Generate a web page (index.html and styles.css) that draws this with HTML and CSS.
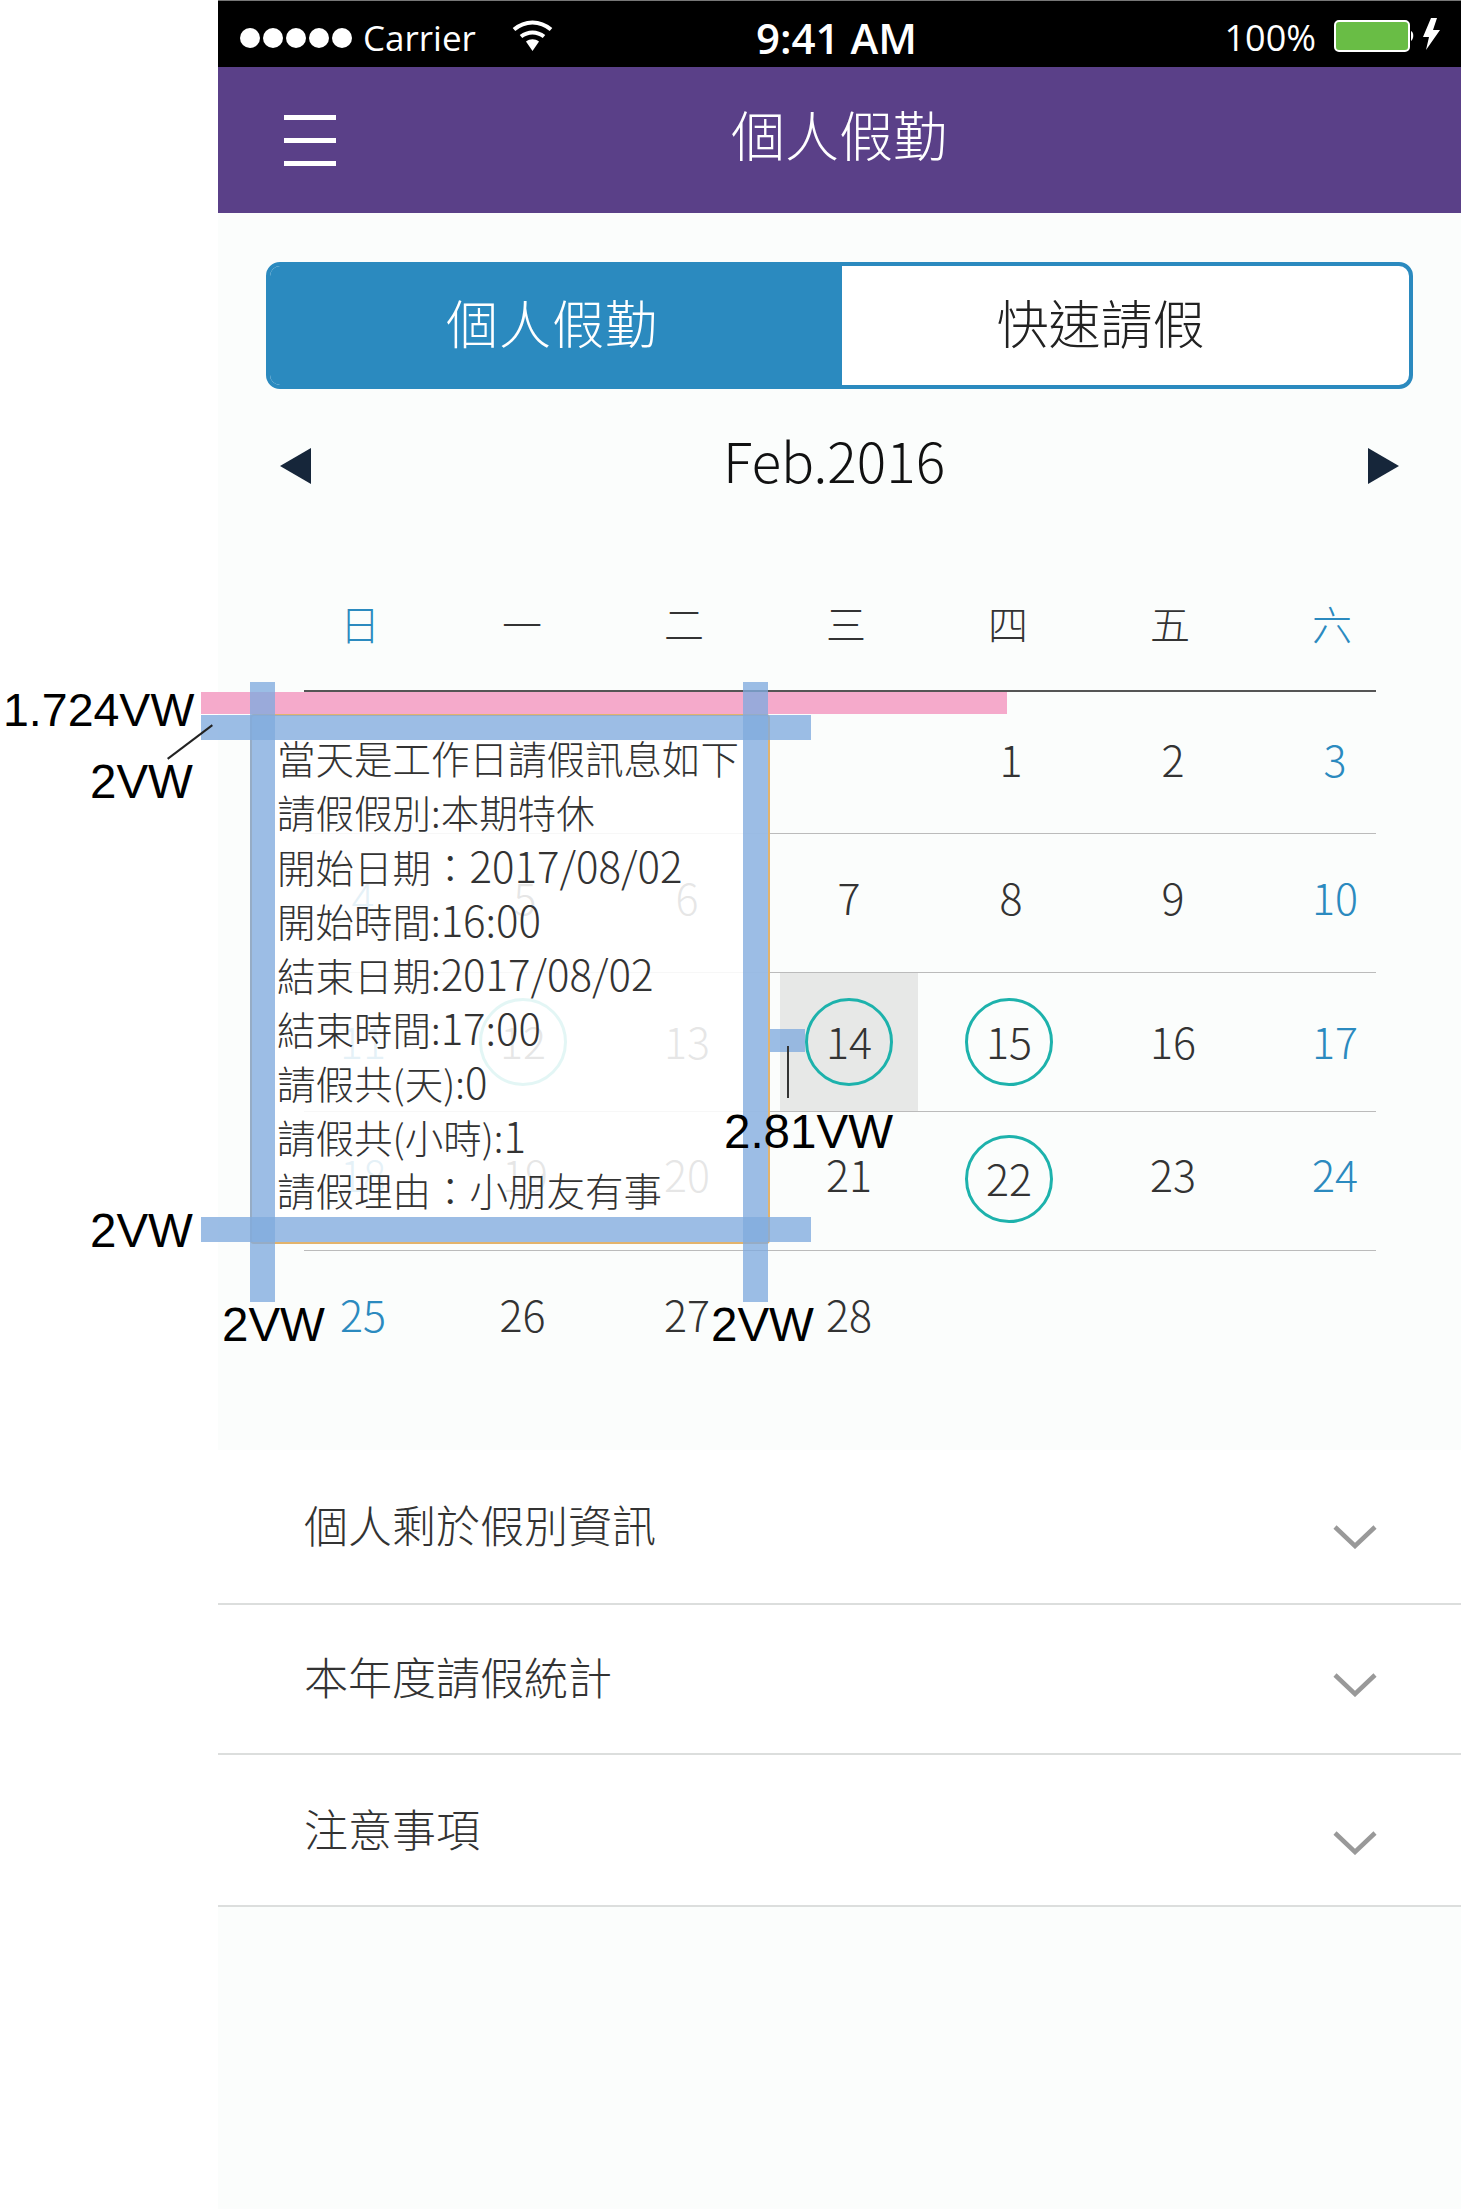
FILE: index.html
```html
<!DOCTYPE html>
<html lang="zh-Hant">
<head>
    <meta charset="UTF-8">
    <meta name="viewport" content="width=device-width, initial-scale=1.0">
    <title>個人假勤</title>
    <link rel="stylesheet" href="styles.css">
</head>
<body>
    <div class="phone">
        <div class="status-bar">
            <div class="status-left">
                <div class="signal"><i></i><i></i><i></i><i></i><i></i></div>
                <span class="carrier">Carrier</span>
                <svg class="wifi" width="41" height="31" viewBox="0 0 41 31">
                    <path d="M2 9.5C13 0 28 0 39 9.5" fill="none" stroke="#fff" stroke-width="4"/>
                    <path d="M9 16.5C16 11 25 11 32 16.5" fill="none" stroke="#fff" stroke-width="4"/>
                    <path d="M14 21.5C18 18.5 23 18.5 27 21.5L20.5 31Z" fill="#fff"/>
                </svg>
            </div>
            <div class="clock">9:41 AM</div>
            <div class="status-right">
                <span class="percent">100%</span>
                <svg class="battery" width="106" height="34" viewBox="0 0 106 34">
                    <rect x="1" y="3" width="74" height="30" rx="4" fill="#69bd45" stroke="#fff" stroke-width="2"/>
                    <path d="M77 13C80 14 80 21 77 23Z" fill="#fff"/>
                    <path d="M97 0L89 19H95L92 32L106 12H99L103 0Z" fill="#fff"/>
                </svg>
            </div>
        </div>

        <div class="nav-bar">
            <div class="menu-btn"><i></i><i></i><i></i></div>
            <div class="nav-title">個人假勤</div>
        </div>

        <div class="main">
            <div class="tabs">
                <div class="tab tab-on">個人假勤</div>
                <div class="tab tab-off">快速請假</div>
            </div>

            <div class="month-bar">
                <svg class="arrow" width="31" height="36" viewBox="0 0 31 36"><path d="M31 0V36L0 18Z" fill="#16263a"/></svg>
                <div class="month-name">Feb.2016</div>
                <svg class="arrow" width="31" height="36" viewBox="0 0 31 36"><path d="M0 0V36L31 18Z" fill="#16263a"/></svg>
            </div>

            <div class="calendar">
                <div class="week-head">
                    <div class="cells">
                        <div class="cell blue">日</div>
                        <div class="cell">一</div>
                        <div class="cell">二</div>
                        <div class="cell">三</div>
                        <div class="cell">四</div>
                        <div class="cell">五</div>
                        <div class="cell blue">六</div>
                    </div>
                </div>
                <div class="week r1">
                    <div class="cells">
                        <div class="cell"></div>
                        <div class="cell"></div>
                        <div class="cell"></div>
                        <div class="cell"></div>
                        <div class="cell">1</div>
                        <div class="cell">2</div>
                        <div class="cell blue">3</div>
                    </div>
                </div>
                <div class="week r2">
                    <div class="cells">
                        <div class="cell blue">4</div>
                        <div class="cell">5</div>
                        <div class="cell">6</div>
                        <div class="cell">7</div>
                        <div class="cell">8</div>
                        <div class="cell">9</div>
                        <div class="cell blue">10</div>
                    </div>
                </div>
                <div class="week r3">
                    <div class="cells">
                        <div class="cell blue">11</div>
                        <div class="cell"><span class="ring ring-l">12</span></div>
                        <div class="cell">13</div>
                        <div class="cell today"><span class="ring">14</span></div>
                        <div class="cell"><span class="ring ring-l">15</span></div>
                        <div class="cell">16</div>
                        <div class="cell blue">17</div>
                    </div>
                </div>
                <div class="week r4">
                    <div class="cells">
                        <div class="cell blue">18</div>
                        <div class="cell">19</div>
                        <div class="cell">20</div>
                        <div class="cell">21</div>
                        <div class="cell"><span class="ring ring-l">22</span></div>
                        <div class="cell">23</div>
                        <div class="cell blue">24</div>
                    </div>
                </div>
                <div class="week r5">
                    <div class="cells">
                        <div class="cell blue">25</div>
                        <div class="cell cell-l">26</div>
                        <div class="cell">27</div>
                        <div class="cell">28</div>
                        <div class="cell"></div>
                        <div class="cell"></div>
                        <div class="cell"></div>
                    </div>
                </div>

                <div class="leave-popup">
                    <p>當天是工作日請假訊息如下</p>
                    <p>請假假別:本期特休</p>
                    <p>開始日期：<span class="lat">2017/08/02</span></p>
                    <p>開始時間:<span class="lat">16:00</span></p>
                    <p>結束日期:<span class="lat">2017/08/02</span></p>
                    <p>結束時間:<span class="lat">17:00</span></p>
                    <p>請假共(天):<span class="lat">0</span></p>
                    <p>請假共(小時):<span class="lat">1</span></p>
                    <p>請假理由：小朋友有事</p>
                </div>
            </div>
        </div>

        <div class="accordion">
            <div class="acc-row acc-1">
                <span>個人剩於假別資訊</span>
                <svg class="chev" width="44" height="24" viewBox="0 0 44 24"><path d="M2 2L22 21L42 2" fill="none" stroke="#999" stroke-width="4.5"/></svg>
            </div>
            <div class="acc-row acc-2">
                <span>本年度請假統計</span>
                <svg class="chev" width="44" height="24" viewBox="0 0 44 24"><path d="M2 2L22 21L42 2" fill="none" stroke="#999" stroke-width="4.5"/></svg>
            </div>
            <div class="acc-row acc-3">
                <span>注意事項</span>
                <svg class="chev" width="44" height="24" viewBox="0 0 44 24"><path d="M2 2L22 21L42 2" fill="none" stroke="#999" stroke-width="4.5"/></svg>
            </div>
        </div>
        <div class="page-end"></div>
    </div>

    <!-- spec marks drawn over the design -->
    <div class="mark mark-pink"></div>
    <div class="mark mark-top"></div>
    <div class="mark mark-bottom"></div>
    <div class="mark mark-left"></div>
    <div class="mark mark-right"></div>
    <div class="mark mark-gap"></div>
    <div class="tick"></div>
    <div class="leader"></div>
    <div class="note note-a">1.724VW</div>
    <div class="note note-b">2VW</div>
    <div class="note note-c">2VW</div>
    <div class="note note-d">2VW</div>
    <div class="note note-e">2VW</div>
    <div class="note note-f">2.81VW</div>
</body>
</html>
```

FILE: styles.css
```css
* { box-sizing: border-box; }
body { margin: 0; width: 1461px; height: 2209px; position: relative; overflow: hidden; background: #fff; font-family: "Noto Sans CJK TC", "Noto Sans", sans-serif; font-weight: 300; color: #333; }
p { margin: 0; height: 54px; }

.phone { margin-left: 218px; height: 2209px; background: #fbfdfc; display: flex; flex-direction: column; }

.status-bar { height: 67px; padding-top: 7px; background: #000; border-top: 1px solid #777; color: #fff; display: grid; grid-template-columns: 1fr auto 1fr; align-items: center; font-family: "Open Sans", sans-serif; font-weight: 400; }
.status-left { display: flex; align-items: center; padding-left: 22px; }
.signal { display: flex; gap: 3px; }
.signal i { width: 20px; height: 20px; border-radius: 50%; background: #fff; }
.carrier { font-size: 35px; margin-left: 11px; }
.wifi { margin: -4px 0 0 36px; }
.clock { font-size: 42px; font-weight: 600; margin-right: 6px; }
.status-right { display: flex; align-items: center; justify-content: flex-end; padding-right: 21px; }
.percent { font-size: 36px; margin-right: 18px; }
.battery { margin-top: -6px; }

.nav-bar { height: 146px; background: #5a4088; display: flex; align-items: center; justify-content: center; position: relative; color: #fff; padding-bottom: 14px; }
.nav-title { font-size: 54px; margin-right: 1px; }
.menu-btn { position: absolute; left: 66px; top: 48px; width: 52px; display: flex; flex-direction: column; gap: 18px; }
.menu-btn i { height: 5px; background: #fff; }

.main { height: 1237px; padding-top: 49px; }

.tabs { margin: 0 48px; height: 127px; display: flex; border: 4px solid #2b8abf; border-radius: 14px; overflow: hidden; background: #fff; }
.tab { height: 100%; display: flex; align-items: center; justify-content: center; font-size: 52px; padding-bottom: 8px; }
.tab-on { width: 572px; background: #2b8abf; color: #fff; letter-spacing: 1px; padding-right: 8px; }
.tab-off { flex: 1; color: #222; padding-right: 50px; }

.month-bar { height: 100px; margin-top: 24px; padding: 0 62px; display: flex; align-items: center; justify-content: space-between; }
.month-name { font-size: 55px; color: #111; padding: 0 11px 8px 0; }
.arrow { margin-top: 6px; }

.calendar { margin: 48px 85px 0 86px; position: relative; }
.cells { margin: 0 -40px 0 -22px; height: 100%; display: grid; grid-template-columns: repeat(7, 162px); }
.cell { display: flex; align-items: center; justify-content: center; font-size: 43px; padding-bottom: 4px; }
.cell-l { padding-right: 5px; }
.blue { color: #2b8abf; }
.week-head { height: 131px; border-bottom: 2px solid #555; }
.week-head .cells { margin: 0 -37px 0 -25px; }
.week-head .cell { font-size: 40px; padding-bottom: 6px; }
.week { height: 139px; border-bottom: 1px solid #bbb; }
.r1 { height: 142px; }
.r1 .cell { padding-bottom: 10px; }
.r2 .cell { padding-bottom: 14px; }
.r3 .cell { padding-bottom: 5px; }
.r3 .ring { margin-top: 5px; }
.r4 .cell { padding-bottom: 17px; }
.r4 .ring { margin-top: 12px; }
.r5 { border-bottom: 0; }
.r5 .cell { padding-bottom: 15px; }
.today { width: 138px; justify-self: center; background: #e7e8e7; }
.ring { width: 88px; height: 88px; padding-bottom: 4px; border: 3px solid #1db2ac; border-radius: 50%; display: flex; align-items: center; justify-content: center; }
.ring-l { margin-right: 4px; }

.leave-popup { position: absolute; left: -54px; top: 153px; width: 520px; height: 530px; padding: 14px 0 0 25px; background: rgba(255, 255, 255, 0.88); border: 2px solid #e2b36c; border-radius: 4px; font-size: 38.5px; line-height: 54px; white-space: nowrap; }
.lat { font-size: 42px; }

.accordion { background: #fff; }
.acc-row { display: flex; justify-content: space-between; padding: 0 84px 0 86px; border-bottom: 2px solid #dcdedd; font-size: 44px; position: relative; }
.acc-1 { height: 155px; padding-top: 44px; }
.acc-2 { height: 150px; padding-top: 41px; }
.acc-3 { height: 152px; padding-top: 43px; }
.acc-row span { line-height: 60px; }
.chev { margin-top: 31px; }
.acc-2 .chev { margin-top: 27px; }
.acc-3 .chev { margin-top: 33px; }
.page-end { flex: 1; }

.mark { position: absolute; background: rgba(128, 170, 222, 0.78); }
.mark-pink { left: 201px; top: 692px; width: 806px; height: 22px; background: #f5aacb; }
.mark-top { left: 201px; top: 715px; width: 610px; height: 25px; }
.mark-bottom { left: 201px; top: 1217px; width: 610px; height: 25px; }
.mark-left { left: 250px; top: 682px; width: 25px; height: 620px; }
.mark-right { left: 743px; top: 682px; width: 25px; height: 620px; }
.mark-gap { left: 770px; top: 1029px; width: 35px; height: 23px; }
.tick { position: absolute; left: 787px; top: 1046px; width: 2px; height: 52px; background: #333; }
.leader { position: absolute; left: 162px; top: 741px; width: 56px; height: 2px; background: #222; transform: rotate(-37deg); }

.note { position: absolute; font-family: "Liberation Sans", Arial, sans-serif; font-weight: 400; font-size: 47.5px; line-height: 52px; color: #000; white-space: nowrap; }
.note-a { left: 3px; top: 684px; font-size: 46.5px; }
.note-b { left: 90px; top: 756px; }
.note-c { left: 90px; top: 1205px; }
.note-d { left: 222px; top: 1299px; }
.note-e { left: 711px; top: 1299px; }
.note-f { left: 724px; top: 1106px; }
```
